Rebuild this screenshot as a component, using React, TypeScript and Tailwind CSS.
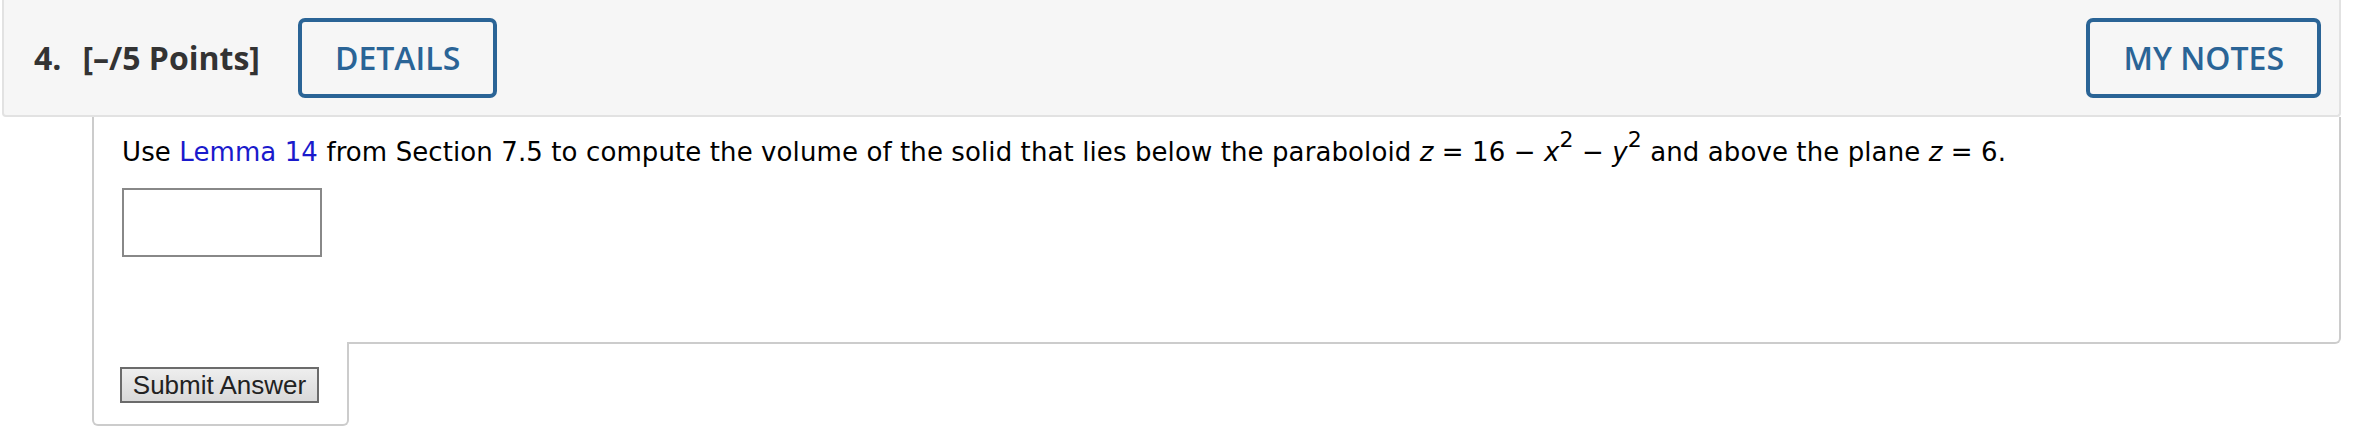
import React from "react";

export default function App() {
  const open = { fontFamily: '"Open Sans", "Noto Sans", sans-serif' };
  const verd = { fontFamily: '"DejaVu Sans", Verdana, sans-serif' };
  return (
    <div className="w-[2356px] h-[440px] bg-white overflow-hidden">
      <div className="pl-[2px] pr-[15px]">
        <div
          className="h-[117px] bg-[#f6f6f6] border-l-2 border-r-2 border-b-2 border-[#e2e2e2] rounded-b-[4px] flex items-center pl-[30px] pr-[18px]"
          style={open}
        >
          <span className="text-[32px] font-bold text-[#333333]">4.</span>
          <span className="ml-[21px] text-[32px] font-bold text-[#333333]">[–/5 Points]</span>
          <button className="ml-[38px] h-[80px] px-[33px] border-4 border-[#2a6496] rounded-[7px] text-[32px] font-semibold text-[#2a6496] leading-none">
            DETAILS
          </button>
          <div className="flex-1" />
          <button className="h-[80px] px-[33px] border-4 border-[#2a6496] rounded-[7px] text-[32px] font-semibold text-[#2a6496] leading-none">
            MY NOTES
          </button>
        </div>
        <div className="ml-[90px]">
          <div className="h-[227px] border-l-2 border-r-2 border-b-2 border-[#cccccc] rounded-br-[6px] pl-[28px] pt-[20px]">
            <p className="text-[26px] leading-[30px] tracking-[0.1px] text-black whitespace-nowrap" style={verd}>
              Use <span className="text-[#1a1acc]">Lemma 14</span> from Section 7.5 to compute the volume of the solid that lies below the paraboloid <i>z</i> = 16 − <i>x</i>
              <sup className="text-[22px] top-[-0.65em]">2</sup> − <i>y</i>
              <sup className="text-[22px] top-[-0.65em]">2</sup> and above the plane <i>z</i> = 6.
            </p>
            <div className="mt-[21px] w-[200px] h-[69px] border-2 border-[#888888] bg-white" />
          </div>
          <div className="-mt-[2px] w-[257px] h-[84px] bg-white border-l-2 border-r-2 border-b-2 border-[#cccccc] rounded-b-[6px] pl-[26px] pt-[25px]">
            <button
              className="w-[199px] h-[36px] border-2 border-[#6b6b6b] bg-gradient-to-b from-[#eeeeee] to-[#d9d9d9] text-[26px] leading-none text-[#222222]"
              style={{ fontFamily: '"Liberation Sans", Arial, sans-serif' }}
            >
              Submit Answer
            </button>
          </div>
        </div>
      </div>
    </div>
  );
}
